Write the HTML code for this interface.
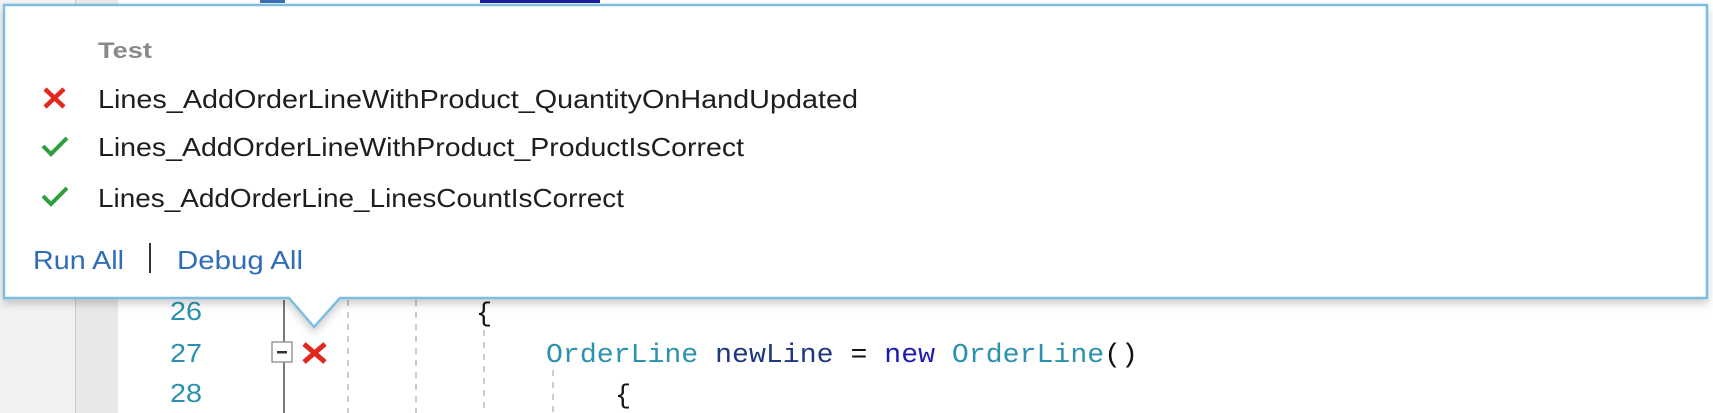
<!DOCTYPE html>
<html><head><meta charset="utf-8"><style>
html,body{margin:0;padding:0;background:#fff;}
svg{display:block;}
</style></head><body>
<svg width="1713" height="413" viewBox="0 0 1713 413" xmlns="http://www.w3.org/2000/svg">
<defs>
<filter id="sh" x="-5%" y="-10%" width="110%" height="130%">
<feDropShadow dx="0" dy="5" stdDeviation="4" flood-color="#000" flood-opacity="0.18"/>
</filter>
</defs>
<rect width="1713" height="413" fill="#fff"/>
<rect x="0" y="0" width="75" height="413" fill="#f2f2f2"/>
<rect x="75" y="0" width="1" height="413" fill="#c8c8c8"/>
<rect x="76" y="0" width="42" height="413" fill="#e8e8e8"/>
<rect x="260" y="0" width="25" height="3" fill="#3b6fb5"/>
<rect x="480" y="0" width="120" height="3" fill="#1c1c9c"/>
<g font-family="Liberation Sans, sans-serif" font-size="26" fill="#2b91af">
<text x="170" y="320" textLength="32" lengthAdjust="spacingAndGlyphs">26</text>
<text x="170" y="362" textLength="32" lengthAdjust="spacingAndGlyphs">27</text>
<text x="170" y="402" textLength="32" lengthAdjust="spacingAndGlyphs">28</text>
</g>
<rect x="283" y="300" width="2" height="113" fill="#7a7a7a"/>
<rect x="272" y="342" width="20" height="20" fill="#fff" stroke="#9a9a9a" stroke-width="1.5"/>
<rect x="277" y="351" width="10" height="2.5" fill="#333"/>
<path d="M304 344 L325 362 M325 344 L304 362" stroke="#e0281e" stroke-width="5" stroke-linecap="butt"/>
<g stroke="#bbb" stroke-width="1.5" stroke-dasharray="6 6">
<line x1="348" y1="300" x2="348" y2="413"/>
<line x1="416" y1="300" x2="416" y2="413"/>
<line x1="484" y1="330" x2="484" y2="413"/>
<line x1="553" y1="370" x2="553" y2="413"/>
</g>
<g font-family="Liberation Mono, monospace" font-size="27">
<text x="476" y="321" fill="#111">{</text>
<text x="546" y="362" textLength="592" lengthAdjust="spacingAndGlyphs"><tspan fill="#2b91af">OrderLine</tspan><tspan fill="#1f377f"> newLine</tspan><tspan fill="#111"> = </tspan><tspan fill="#1c1cae">new</tspan><tspan fill="#2b91af"> OrderLine</tspan><tspan fill="#111">()</tspan></text>
<text x="615" y="403" fill="#111">{</text>
</g>
<g filter="url(#sh)">
<path d="M4 5 H1707 V298 H340 L314 327 L289 298 H4 Z" fill="#fff" stroke="#7cbde0" stroke-width="2.5"/>
</g>
<g font-family="Liberation Sans, sans-serif">
<text x="98" y="58" font-size="22" font-weight="bold" fill="#8a8a8a" textLength="54" lengthAdjust="spacingAndGlyphs">Test</text>
<text x="98" y="108" font-size="26" fill="#1e1e1e" textLength="760" lengthAdjust="spacingAndGlyphs">Lines_AddOrderLineWithProduct_QuantityOnHandUpdated</text>
<text x="98" y="156" font-size="26" fill="#1e1e1e" textLength="646" lengthAdjust="spacingAndGlyphs">Lines_AddOrderLineWithProduct_ProductIsCorrect</text>
<text x="98" y="207" font-size="26" fill="#1e1e1e" textLength="526" lengthAdjust="spacingAndGlyphs">Lines_AddOrderLine_LinesCountIsCorrect</text>
<text x="33" y="269" font-size="26" fill="#2f6db5" textLength="91" lengthAdjust="spacingAndGlyphs">Run All</text>
<text x="177" y="269" font-size="26" fill="#2f6db5" textLength="126" lengthAdjust="spacingAndGlyphs">Debug All</text>
</g>
<rect x="149" y="243" width="2" height="30" fill="#333"/>
<path d="M45 89 L64 107 M64 89 L45 107" stroke="#e0281e" stroke-width="4.5"/>
<path d="M43 146 L51 154 L67 138" stroke="#2e9e3e" stroke-width="4" fill="none"/>
<path d="M43 196 L51 204 L67 188" stroke="#2e9e3e" stroke-width="4" fill="none"/>
</svg>
</body></html>
